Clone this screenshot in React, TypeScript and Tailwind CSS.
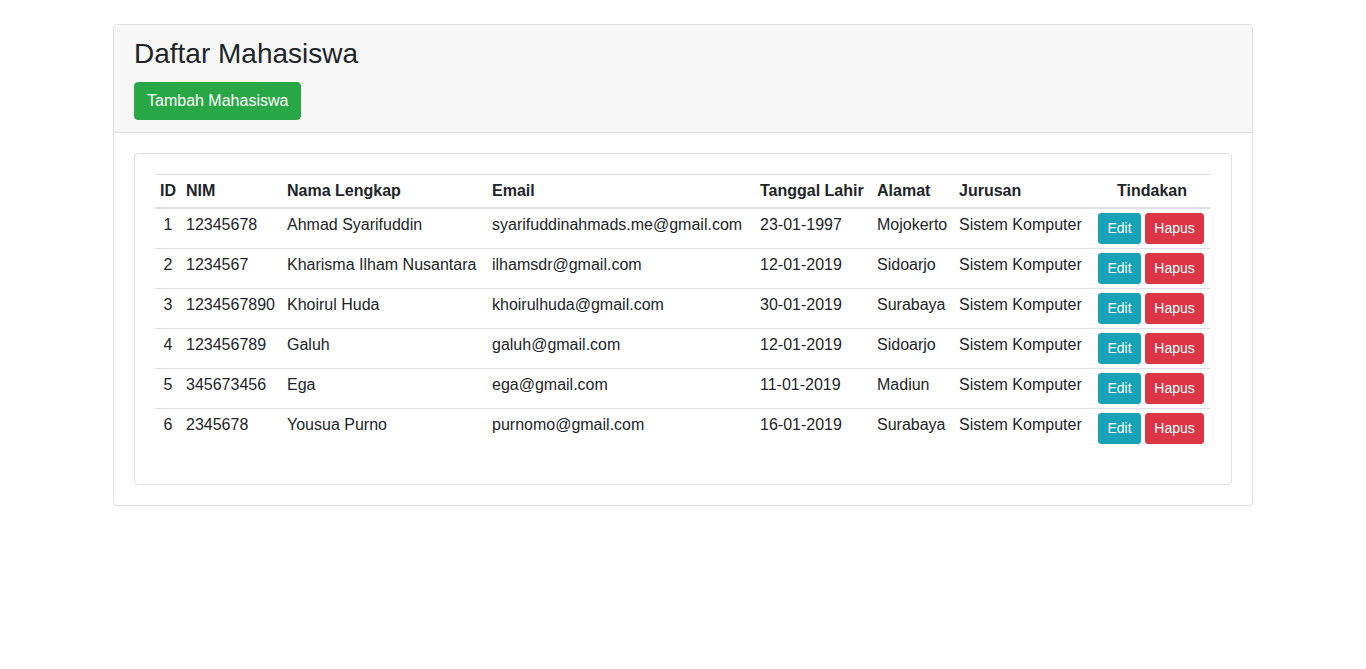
import React from "react";

const mahasiswa = [
  { id: 1, nim: "12345678", nama: "Ahmad Syarifuddin", email: "syarifuddinahmads.me@gmail.com", lahir: "23-01-1997", alamat: "Mojokerto", jurusan: "Sistem Komputer" },
  { id: 2, nim: "1234567", nama: "Kharisma Ilham Nusantara", email: "ilhamsdr@gmail.com", lahir: "12-01-2019", alamat: "Sidoarjo", jurusan: "Sistem Komputer" },
  { id: 3, nim: "1234567890", nama: "Khoirul Huda", email: "khoirulhuda@gmail.com", lahir: "30-01-2019", alamat: "Surabaya", jurusan: "Sistem Komputer" },
  { id: 4, nim: "123456789", nama: "Galuh", email: "galuh@gmail.com", lahir: "12-01-2019", alamat: "Sidoarjo", jurusan: "Sistem Komputer" },
  { id: 5, nim: "345673456", nama: "Ega", email: "ega@gmail.com", lahir: "11-01-2019", alamat: "Madiun", jurusan: "Sistem Komputer" },
  { id: 6, nim: "2345678", nama: "Yousua Purno", email: "purnomo@gmail.com", lahir: "16-01-2019", alamat: "Surabaya", jurusan: "Sistem Komputer" },
];

const th = "border-t border-b-2 border-[#dee2e6] px-[5px] py-[4px] text-left font-bold leading-6 align-bottom";

export default function App() {
  return (
    <div className="min-h-screen bg-white font-['Liberation_Sans',Arial,sans-serif] text-[16px] text-[#212529]">
      <div className="mx-auto w-[1140px] pt-[24px]">
        <div className="rounded border border-[#dfdfdf] bg-white">
          {/* header */}
          <div className="rounded-t border-b border-[#dfdfdf] bg-[#f7f7f7] px-5 pt-3 pb-3">
            <h3 className="mb-[11px] text-[28px] leading-[34px] font-normal">Daftar Mahasiswa</h3>
            <button className="h-[38px] rounded border border-[#28a745] bg-[#28a745] px-3 text-[16px] leading-6 text-white">
              Tambah Mahasiswa
            </button>
          </div>

          <div className="p-5">
            <div className="rounded border border-[#dfdfdf] p-5">
              <table className="mb-4 w-full table-fixed border-separate border-spacing-0">
                <thead>
                  <tr>
                    <th className={`${th} w-[26px] !text-center`}>ID</th>
                    <th className={`${th} w-[101px]`}>NIM</th>
                    <th className={`${th} w-[205px]`}>Nama Lengkap</th>
                    <th className={`${th} w-[268px]`}>Email</th>
                    <th className={`${th} w-[117px]`}>Tanggal Lahir</th>
                    <th className={`${th} w-[82px]`}>Alamat</th>
                    <th className={`${th} w-[139px]`}>Jurusan</th>
                    <th className={`${th} w-[118px] !text-center`}>Tindakan</th>
                  </tr>
                </thead>
                <tbody>
                  {mahasiswa.map((m, i) => {
                    const td = `${i === 0 ? "" : "border-t border-[#dee2e6]"} px-[5px] py-[4px] align-top leading-6 whitespace-nowrap`;
                    return (
                      <tr key={m.id}>
                        <td className={`${td} text-center`}>{m.id}</td>
                        <td className={td}>{m.nim}</td>
                        <td className={td}>{m.nama}</td>
                        <td className={td}>{m.email}</td>
                        <td className={td}>{m.lahir}</td>
                        <td className={td}>{m.alamat}</td>
                        <td className={td}>{m.jurusan}</td>
                        <td className={td}>
                          <div className="flex gap-[4px]">
                            <button className="h-[31px] w-[43px] rounded-[3px] border border-[#17a2b8] bg-[#17a2b8] text-[14px] leading-[21px] text-white">
                              Edit
                            </button>
                            <button className="h-[31px] w-[59px] rounded-[3px] border border-[#dc3545] bg-[#dc3545] text-[14px] leading-[21px] text-white">
                              Hapus
                            </button>
                          </div>
                        </td>
                      </tr>
                    );
                  })}
                </tbody>
              </table>
            </div>
          </div>
        </div>
      </div>
    </div>
  );
}
